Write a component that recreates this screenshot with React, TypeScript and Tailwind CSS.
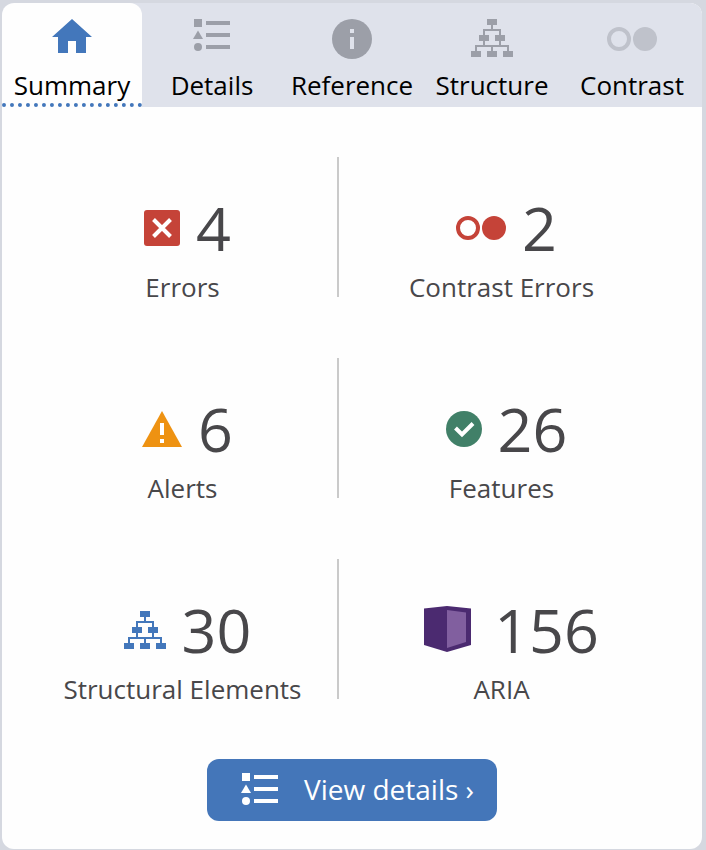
import { useState, type ReactNode } from "react";

function HomeIcon() {
  return (
    <svg width="40" height="40" viewBox="0 0 40 40" className="text-[#4377bb]" fill="currentColor" aria-hidden="true">
      <path d="M20 0L40 18H34V34H24V22H16V34H6V18H0Z" />
    </svg>
  );
}

function ListIcon() {
  return (
    <svg width="40" height="32" viewBox="0 0 40 32" fill="currentColor" aria-hidden="true">
      <rect x="2" y="0" width="8" height="8" />
      <path d="M6 11.5L11 20H1Z" />
      <circle cx="6" cy="28" r="4" />
      <rect x="14" y="2" width="24" height="4" />
      <rect x="14" y="14" width="24" height="4" />
      <rect x="14" y="26" width="24" height="4" />
    </svg>
  );
}

function InfoIcon() {
  return (
    <svg width="40" height="40" viewBox="0 0 40 40" aria-hidden="true">
      <circle cx="20" cy="20" r="20" fill="currentColor" />
      <rect x="18" y="10" width="4" height="4" fill="#dfe2eb" />
      <rect x="18" y="18" width="4" height="12" fill="#dfe2eb" />
    </svg>
  );
}

function TreeIcon() {
  return (
    <svg width="42" height="38" viewBox="0 0 42 38" fill="currentColor" aria-hidden="true">
      <path d="M16 0h10v6H16zM8 16h10v6H8zM24 16h10v6H24zM0 32h10v6H0zM16 32h10v6H16zM32 32h10v6H32z" />
      <path d="M20 6h2v4h8v6h-2v-4H14v4h-2v-6h8z" />
      <path d="M12 22h2v4h14v-4h2v4h8v6h-2v-4H22v4h-2v-4H6v4H4v-6h8z" />
    </svg>
  );
}

function ContrastIcon() {
  return (
    <svg width="50" height="24" viewBox="0 0 50 24" aria-hidden="true">
      <circle cx="12" cy="12" r="10" fill="none" stroke="currentColor" strokeWidth="4" />
      <circle cx="38" cy="12" r="12" fill="currentColor" />
    </svg>
  );
}

function ErrorIcon() {
  return (
    <svg width="36" height="36" viewBox="0 0 36 36" aria-hidden="true">
      <rect width="36" height="36" rx="3" fill="#c54338" />
      <path d="M9.5 9.5L26.5 26.5M26.5 9.5L9.5 26.5" stroke="#fff" strokeWidth="4" />
    </svg>
  );
}

function AlertIcon() {
  return (
    <svg width="40" height="36" viewBox="0 0 40 36" aria-hidden="true">
      <path d="M20 0L40 36H0Z" fill="#ee9212" />
      <path d="M18 12h4v12h-4zM18 28h4v4h-4z" fill="#fff" />
    </svg>
  );
}

function FeatureIcon() {
  return (
    <svg width="36" height="36" viewBox="0 0 36 36" aria-hidden="true">
      <circle cx="18" cy="18" r="18" fill="#418068" />
      <path d="M9.5 17L16 23.5L27 12.5" fill="none" stroke="#fff" strokeWidth="4" />
    </svg>
  );
}

function AriaIcon() {
  return (
    <svg width="64" height="48" viewBox="0 0 64 48" aria-hidden="true">
      <path d="M10 2.5L33 0L57 2.5V39L33 46L10 39Z" fill="#4b2a70" />
      <path d="M33 4L52 6.5V36L33 42Z" fill="#815f9f" />
    </svg>
  );
}

const tabs: { name: string; icon: ReactNode; color: string; pad: string }[] = [
  { name: "Summary", icon: <HomeIcon />, color: "text-[#4377bb]", pad: "" },
  { name: "Details", icon: <ListIcon />, color: "text-[#9c9fa8]", pad: "" },
  { name: "Reference", icon: <InfoIcon />, color: "text-[#9c9fa8]", pad: "" },
  { name: "Structure", icon: <TreeIcon />, color: "text-[#9c9fa8]", pad: "" },
  { name: "Contrast", icon: <ContrastIcon />, color: "text-[#bfc2cb]", pad: "pt-2" },
];

const stats: { label: string; count: number; icon: ReactNode; color: string }[] = [
  { label: "Errors", count: 4, icon: <ErrorIcon />, color: "" },
  { label: "Contrast Errors", count: 2, icon: <ContrastIcon />, color: "text-[#c54338]" },
  { label: "Alerts", count: 6, icon: <AlertIcon />, color: "" },
  { label: "Features", count: 26, icon: <FeatureIcon />, color: "" },
  { label: "Structural Elements", count: 30, icon: <TreeIcon />, color: "text-[#4377bb]" },
  { label: "ARIA", count: 156, icon: <AriaIcon />, color: "" },
];

export default function App() {
  const [active, setActive] = useState("Summary");

  return (
    <div className="min-h-screen bg-[#d5d8e0] pt-[3px] pr-1 pb-px pl-0.5 font-['Open_Sans','Noto_Sans',sans-serif]">
      <main className="overflow-hidden rounded-xl bg-[#fefefe] pb-7">
        <div role="tablist" className="grid grid-cols-5 bg-[#dfe2eb]">
          {tabs.map(({ name, icon, color, pad }) => (
            <button
              key={name}
              role="tab"
              aria-selected={active === name}
              onClick={() => setActive(name)}
              className={`flex cursor-pointer flex-col items-center border-b-4 border-dotted pt-4 ${
                active === name ? "rounded-t-xl border-[#4377bb] bg-[#fefefe]" : "border-transparent"
              }`}
            >
              <span className={`flex h-10 items-start ${color} ${pad}`}>{icon}</span>
              <span className="mt-2 text-[26px] leading-9 text-black">{name}</span>
            </button>
          ))}
        </div>

        <ul className="mt-[50px] grid grid-cols-[311fr_325fr] gap-y-[61px] pr-[38px] pl-[26px]">
          {stats.map(({ label, count, icon, color }) => (
            <li
              key={label}
              className="flex flex-col items-center gap-[18px] border-[#cacaca] pt-10 text-[#48474a] odd:border-r-2"
            >
              <div className="flex items-center gap-4 pl-2.5">
                <span className={color}>{icon}</span>
                <span className="text-[61px] leading-[62px]">{count}</span>
              </div>
              <span className="text-[26px] leading-5 whitespace-nowrap">{label}</span>
            </li>
          ))}
        </ul>

        <button className="mx-auto mt-[60px] flex h-[62px] w-[290px] cursor-pointer items-center gap-6 rounded-xl bg-[#4476b9] pb-0.5 pl-[33px] text-white">
          <ListIcon />
          <span className="text-[28px] leading-9 whitespace-nowrap">View details ›</span>
        </button>
      </main>
    </div>
  );
}
